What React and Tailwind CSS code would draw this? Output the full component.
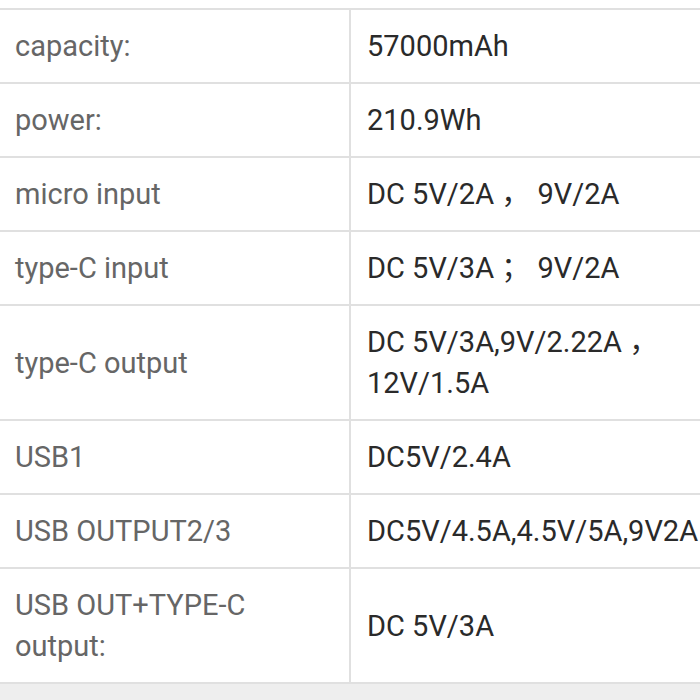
import React from 'react';

const specs = [
  { label: 'capacity:', value: '57000mAh' },
  { label: 'power:', value: '210.9Wh' },
  { label: 'micro input', value: 'DC 5V/2A ， 9V/2A' },
  { label: 'type-C input', value: 'DC 5V/3A ； 9V/2A' },
  { label: 'type-C output', value: 'DC 5V/3A,9V/2.22A ， 12V/1.5A' },
  { label: 'USB1', value: 'DC5V/2.4A' },
  { label: 'USB OUTPUT2/3', value: 'DC5V/4.5A,4.5V/5A,9V2A' },
  { label: 'USB OUT+TYPE-C output:', value: 'DC 5V/3A' },
];

const SpecRow = ({ label, value }) => (
  <div className="flex border-b-2 border-[#e0e0e0]">
    {/* label cell */}
    <div className="w-[351px] shrink-0 border-r-2 border-[#e0e0e0] pl-[15px] pr-4 pt-[16px] pb-[15px] flex items-center text-[#666666]">
      {label}
    </div>
    {/* value cell */}
    <div className="w-[400px] shrink-0 pl-[16px] pr-4 pt-[16px] pb-[15px] flex items-center text-[#2a2a2a]">
      <span className="max-w-[300px]">{value}</span>
    </div>
  </div>
);

export default function App() {
  return (
    <div
      className="w-[700px] h-[700px] overflow-hidden bg-[#eeeeee] flex flex-col text-[29px] leading-[41px]"
      style={{ fontFamily: 'Roboto, "Noto Sans CJK SC", sans-serif' }}
    >
      <div className="bg-white pt-[8px]">
        <div className="border-t-2 border-[#e0e0e0] w-[760px]">
          {specs.map((s) => (
            <SpecRow key={s.label} label={s.label} value={s.value} />
          ))}
        </div>
      </div>
      <div className="flex-1" />
    </div>
  );
}
